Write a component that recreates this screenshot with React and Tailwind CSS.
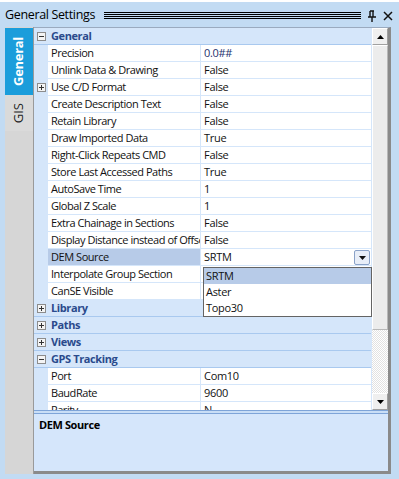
import React from "react";

const font = { fontFamily: '"Open Sans", "Noto Sans", sans-serif' };

const rows = [
  { cat: "General", open: true },
  { name: "Precision", value: "0.0##", blue: true },
  { name: "Unlink Data & Drawing", value: "False" },
  { name: "Use C/D Format", value: "False", plus: true },
  { name: "Create Description Text", value: "False" },
  { name: "Retain Library", value: "False" },
  { name: "Draw Imported Data", value: "True" },
  { name: "Right-Click Repeats CMD", value: "False" },
  { name: "Store Last Accessed Paths", value: "True" },
  { name: "AutoSave Time", value: "1" },
  { name: "Global Z Scale", value: "1" },
  { name: "Extra Chainage in Sections", value: "False" },
  { name: "Display Distance instead of Offset", value: "False" },
  { name: "DEM Source", value: "SRTM", selected: true },
  { name: "Interpolate Group Section", value: "" },
  { name: "CanSE Visible", value: "" },
  { cat: "Library" },
  { cat: "Paths" },
  { cat: "Views" },
  { cat: "GPS Tracking", open: true },
  { name: "Port", value: "Com10" },
  { name: "BaudRate", value: "9600" },
  { name: "Parity", value: "N" },
];

const Expander = ({ open }) => (
  <div className="w-[9px] h-[9px] border border-[#8c8c8c] bg-[#f4f4f4] flex items-center justify-center">
    <svg width="7" height="7" viewBox="0 0 7 7">
      <rect x="1" y="3" width="5" height="1" fill="#333" />
      {!open && <rect x="3" y="1" width="1" height="5" fill="#333" />}
    </svg>
  </div>
);

const Row = ({ row }) => {
  if (row.cat) {
    return (
      <div className="flex h-[17px] shrink-0 bg-[#d5e6fa] border-b border-[#a9c9ef]">
        <div className="w-[14px] flex items-center justify-center">
          <Expander open={row.open} />
        </div>
        <div className="pl-[3px] flex items-center text-[11px] tracking-[-0.4px] font-bold text-[#2a4a8c]">
          {row.cat}
        </div>
      </div>
    );
  }
  return (
    <div className="flex h-[17px] shrink-0">
      <div className="w-[14px] bg-[#d5e6fa] flex items-center justify-center">
        {row.plus && <Expander open={false} />}
      </div>
      <div
        className={`w-[153px] pl-[3px] flex items-center text-[11px] tracking-[-0.45px] text-[#111] whitespace-nowrap overflow-hidden border-b border-r border-[#d5e6fa] ${
          row.selected ? "bg-[#b7cbe8]" : "bg-white"
        }`}
      >
        {row.name}
      </div>
      <div className="flex-1 pl-[3px] flex items-center text-[11px] tracking-[-0.3px] bg-white border-b border-[#d5e6fa] relative">
        <span className={row.blue ? "text-[#1e326e]" : "text-[#111]"}>{row.value}</span>
        {row.selected && (
          <div className="absolute right-[1px] top-[1px] w-[16px] h-[15px] rounded-[2px] border border-[#8aa2c8] bg-[#e8eef8] flex items-center justify-center">
            <svg width="7" height="4" viewBox="0 0 7 4">
              <path d="M0 0h7L3.5 4z" fill="#111" />
            </svg>
          </div>
        )}
      </div>
    </div>
  );
};

const Arrow = ({ up }) => (
  <div className="h-[17px] w-[16px] bg-[#efefef] border border-[#a0a0a0] border-t-white border-l-white flex items-center justify-center shrink-0">
    <svg width="7" height="4" viewBox="0 0 7 4">
      <path d={up ? "M0 4h7L3.5 0z" : "M0 0h7L3.5 4z"} fill="#000" />
    </svg>
  </div>
);

export default function App() {
  return (
    <div className="w-[399px] h-[479px] bg-[#c2dbf3] flex flex-col overflow-hidden" style={font}>
      {/* title bar */}
      <div className="h-[27px] shrink-0 flex items-center pl-[5px] pr-[6px] pt-[2px] border-t-2 border-white">
        <span className="text-[12.5px] tracking-[-0.35px] text-black whitespace-nowrap">General Settings</span>
        <div className="flex-1 ml-[9px] mr-[6px] flex flex-col gap-[1px]">
          <div className="h-px bg-black" />
          <div className="h-px bg-black" />
          <div className="h-px bg-black" />
          <div className="h-px bg-black" />
        </div>
        <svg width="10" height="12" viewBox="0 0 10 12" className="mr-[6px]">
          <path d="M3 1h4M3 1v6M6 1v6M1 7h8M5 7v5" stroke="#111" strokeWidth="1.4" fill="none" />
        </svg>
        <svg width="10" height="10" viewBox="0 0 10 10">
          <path d="M1 1l8 8M9 1l-8 8" stroke="#111" strokeWidth="1.5" />
        </svg>
      </div>

      <div className="flex flex-1 pl-[5px] pb-[5px] pr-[8px] min-h-0">
        {/* tabs */}
        <div className="w-[29px] bg-[#d6d6d6] flex flex-col border-r border-[#9a9a9a] pt-[1px]">
          <div className="h-[67px] bg-[#1b9ddb] flex items-center justify-center">
            <span className="[writing-mode:vertical-rl] rotate-180 text-[13px] tracking-[-0.3px] font-bold text-white">
              General
            </span>
          </div>
          <div className="h-[36px] bg-[#dadada] flex items-center justify-center">
            <span className="[writing-mode:vertical-rl] rotate-180 text-[13px] text-[#222]">GIS</span>
          </div>
        </div>

        {/* main panel */}
        <div className="flex-1 flex flex-col border-t border-[#9aaabf] border-r-[3px] border-r-[#8a8a8a] border-b-[3px] border-b-[#8a8a8a] min-w-0">
          <div className="flex h-[382px] shrink-0 relative">
            <div className="flex-1 flex flex-col overflow-hidden border-r border-[#d5e6fa]">
              {rows.map((r, i) => (
                <Row key={i} row={r} />
              ))}
            </div>
            <div className="w-[16px] flex flex-col bg-[#e8e8e8]">
              <Arrow up />
              <div className="h-[285px] bg-[#ececec] border border-[#b8b8b8] border-t-white border-l-white" />
              <div className="flex-1 bg-[repeating-conic-gradient(#ffffff_0%_25%,#e2e2e2_0%_50%)] bg-size-[2px_2px]" />
              <Arrow />
            </div>

            {/* dropdown list */}
            <div className="absolute left-[169px] top-[239px] w-[169px] h-[50px] bg-white border border-[#646464] flex flex-col text-[11px] tracking-[-0.3px] text-[#111]">
              <div className="h-[16px] bg-[#b7cbe8] pl-[2px] flex items-center">SRTM</div>
              <div className="h-[16px] pl-[2px] flex items-center">Aster</div>
              <div className="h-[16px] pl-[2px] flex items-center">Topo30</div>
            </div>
          </div>
          <div className="h-[4px] shrink-0 border-t border-b border-[#7ea4d8] bg-[#c9def6]" />
          <div className="flex-1 bg-[#d5e6fb] px-[5px] pt-[3px]">
            <div className="text-[11px] tracking-[-0.4px] font-bold text-black">DEM Source</div>
          </div>
        </div>
      </div>
    </div>
  );
}
